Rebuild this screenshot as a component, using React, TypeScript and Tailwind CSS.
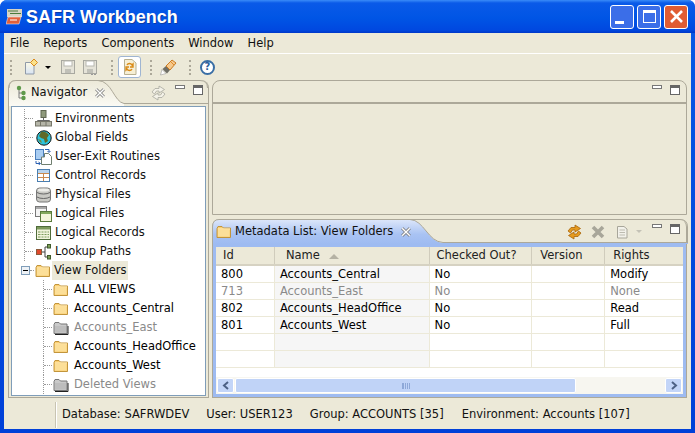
import type { ReactNode } from "react";

function Folder({ gray = false }: { gray?: boolean }) {
  return (
    <svg width="16" height="14" viewBox="0 0 16 14" className="shrink-0">
      {gray ? (
        <>
          <path d="M1 3.5 L2 1.5 H6 L7.5 3 H14 V12.5 H1 Z" fill="#c9c9c9" stroke="#777" />
          <path d="M2 13.5 H15 V5" fill="none" stroke="#222" />
          <path d="M2 5 H13 V11.5 H2 Z" fill="#bdbdbd" />
        </>
      ) : (
        <>
          <path d="M1 3.5 L2 1.5 H6 L7.5 3 H14.5 V12.5 H1 Z" fill="#fbcf72" stroke="#c2953c" />
          <path d="M2 5 H13.5 V11.5 H2 Z" fill="#fcdf98" />
          <path d="M2 4 H14" stroke="#fff0c4" />
        </>
      )}
    </svg>
  );
}

function EnvironmentsIcon() {
  return (
    <svg width="17" height="17" viewBox="0 0 17 17">
      <rect x="6" y="0.5" width="5" height="7" fill="#8f9a7c" stroke="#5f6650" />
      <path d="M8.5 8 V10 M2.5 11 V10.5 H14.5 V11" stroke="#666" fill="none" />
      <rect x="0.5" y="11.5" width="16" height="4.5" fill="#b5b5a8" stroke="#77776a" />
      <path d="M5.5 12 V16 M11 12 V16" stroke="#77776a" />
    </svg>
  );
}

function GlobeIcon() {
  return (
    <svg width="16" height="16" viewBox="0 0 16 16">
      <circle cx="8" cy="8" r="7.2" fill="#2cc4dc" stroke="#111" />
      <path d="M5 2 C8 1 11 2 13 5 L11 8 L12 11 L9 13 L8 9 L5 8 L3 6 Z" fill="#5f6a2a" />
      <path d="M2 9 L5 10 L6 13 L4 12 Z" fill="#6a8a4a" />
    </svg>
  );
}

function UserExitIcon() {
  return (
    <svg width="17" height="17" viewBox="0 0 17 17">
      <rect x="0.5" y="1.5" width="8" height="10" fill="#a9cdf2" stroke="#4a7ebb" />
      <path d="M9.5 5.5 H13.5 L16.5 8.5 V16.5 H6.5 V9 H9.5 Z" fill="#fff" stroke="#6f7f6f" />
      <path d="M10 1.5 H14 V4 M12.5 3 L14 4.5 L15.5 3" stroke="#2a5fb0" fill="none" />
      <path d="M1 13 V15.5 H5 M3.5 14 L5.5 15.5 L3.5 17" stroke="#2a5fb0" fill="none" />
    </svg>
  );
}

function ControlRecordsIcon() {
  return (
    <svg width="13" height="13" viewBox="0 0 13 13">
      <rect x="0.5" y="0.5" width="12" height="12" fill="#fff" stroke="#4a7eb0" />
      <rect x="1" y="1" width="11" height="3" fill="#b8d4ee" />
      <path d="M1 4.5 H12 M6.5 4.5 V12 M1 8.5 H12" stroke="#c98a4e" />
    </svg>
  );
}

function PhysicalFilesIcon() {
  return (
    <svg width="15" height="16" viewBox="0 0 15 16">
      <rect x="0.5" y="1" width="14" height="14" rx="3" fill="#c9c9c4" stroke="#777" />
      <path d="M1 5.5 C4 7.5 11 7.5 14 5.5 M1 10 C4 12 11 12 14 10" fill="none" stroke="#666" />
      <ellipse cx="7.5" cy="3" rx="6" ry="1.6" fill="#ecece8" />
    </svg>
  );
}

function LogicalFilesIcon() {
  return (
    <svg width="17" height="16" viewBox="0 0 17 16">
      <rect x="0.5" y="0.5" width="11" height="10" fill="#f4f4f4" stroke="#777" />
      <rect x="1" y="1" width="10" height="2" fill="#aaa" />
      <rect x="5.5" y="5.5" width="11" height="10" fill="#f5f5dc" stroke="#5a7a3c" />
      <rect x="6" y="6" width="10" height="2" fill="#84a85e" />
    </svg>
  );
}

function LogicalRecordsIcon() {
  return (
    <svg width="15" height="14" viewBox="0 0 15 14">
      <rect x="0.5" y="0.5" width="14" height="13" fill="#f1f3dc" stroke="#4f6b3a" />
      <rect x="1" y="1" width="13" height="2.5" fill="#7d9a5c" />
      <path d="M2 6 H13 M2 8.5 H13 M2 11 H13" stroke="#7d9a5c" />
      <path d="M5 5 V12 M8 5 V12 M11 5 V12" stroke="#f1f3dc" />
    </svg>
  );
}

function LookupPathsIcon() {
  return (
    <svg width="16" height="16" viewBox="0 0 16 16">
      <rect x="0.5" y="5.5" width="5" height="5" fill="#e0492c" stroke="#8a5a3a" />
      <path d="M6 8 H9 M9 3 V13 M9 3 H11 M9 13 H11" stroke="#444" fill="none" />
      <rect x="11.5" y="0.5" width="3" height="3.5" fill="#7fa05a" stroke="#3f5a2a" />
      <rect x="11.5" y="11.5" width="3" height="3.5" fill="#7fa05a" stroke="#3f5a2a" />
    </svg>
  );
}

function SyncIcon({ color = "#e59a1e", edge = "#a8650a" }: { color?: string; edge?: string }) {
  return (
    <svg width="15" height="16" viewBox="0 0 15 16">
      <path d="M1 7 L4 3.5 H8 V1 L13.5 4.5 L8 8 V6 H5.5 L3.5 9 Z" fill={color} stroke={edge} strokeWidth="0.8" />
      <path d="M14 9 L11 12.5 H7 V15 L1.5 11.5 L7 8 V10 H9.5 L11.5 7 Z" fill={color} stroke={edge} strokeWidth="0.8" />
    </svg>
  );
}

function CloseGlyph() {
  return (
    <svg width="10" height="10" viewBox="0 0 10 10" className="relative block">
      <path d="M1.2 1.2 L8.8 8.8 M8.8 1.2 L1.2 8.8" stroke="#777" strokeWidth="3" />
      <path d="M1.2 1.2 L8.8 8.8 M8.8 1.2 L1.2 8.8" stroke="#fff" strokeWidth="1.4" />
    </svg>
  );
}

function MinMax() {
  return (
    <div className="flex items-start gap-[8px]">
      <div className="w-[10px] h-[4px] border border-[#777] bg-white" />
      <div className="w-[10px] h-[10px] border border-[#666] border-t-[3px] bg-white" />
    </div>
  );
}

function Gripper() {
  return <div className="w-[2px] h-[15px] border-l-2 border-dotted border-[#aca899]" />;
}

function DiskIcon({ extra = false }: { extra?: boolean }) {
  return (
    <svg width="16" height="16" viewBox="0 0 16 16">
      <rect x="1.5" y="1.5" width="13" height="13" fill="#e5e3d8" stroke="#a8a8a0" />
      <rect x="4" y="2" width="8" height="5" fill="#fff" stroke="#b8b8b0" />
      <rect x="5" y="10" width="6" height="4" fill="#c0c0b8" />
      {extra && <path d="M9 15.5 H11 M12 15.5 H14" stroke="#999" />}
    </svg>
  );
}

function Connector({ children }: { children?: ReactNode }) {
  return (
    <div className="w-[9px] h-full flex items-center border-l border-dotted border-[#999]">
      <div className="w-full border-t border-dotted border-[#999]">{children}</div>
    </div>
  );
}

const topItems: { label: string; icon: ReactNode }[] = [
  { label: "Environments", icon: <EnvironmentsIcon /> },
  { label: "Global Fields", icon: <GlobeIcon /> },
  { label: "User-Exit Routines", icon: <UserExitIcon /> },
  { label: "Control Records", icon: <ControlRecordsIcon /> },
  { label: "Physical Files", icon: <PhysicalFilesIcon /> },
  { label: "Logical Files", icon: <LogicalFilesIcon /> },
  { label: "Logical Records", icon: <LogicalRecordsIcon /> },
  { label: "Lookup Paths", icon: <LookupPathsIcon /> },
];

const folders = [
  { label: "ALL VIEWS" },
  { label: "Accounts_Central" },
  { label: "Accounts_East", gray: true },
  { label: "Accounts_HeadOffice" },
  { label: "Accounts_West" },
  { label: "Deleted Views", gray: true },
];

const columns = [
  { label: "Id", width: "w-[59px]", pad: "pl-[7px]" },
  { label: "Name", width: "w-[155px]", pad: "pl-[11px]" },
  { label: "Checked Out?", width: "w-[103px]", pad: "pl-[7px]" },
  { label: "Version", width: "w-[73px]", pad: "pl-[8px]" },
  { label: "Rights", width: "w-[78px]", pad: "pl-[8px]" },
];

const rows = [
  { id: "800", name: "Accounts_Central", out: "No", rights: "Modify" },
  { id: "713", name: "Accounts_East", out: "No", rights: "None", muted: true },
  { id: "802", name: "Accounts_HeadOffice", out: "No", rights: "Read" },
  { id: "801", name: "Accounts_West", out: "No", rights: "Full" },
  { id: "", name: "", out: "", rights: "" },
  { id: "", name: "", out: "", rights: "" },
];

function Navigator() {
  return (
    <div className="w-[201px] h-full flex flex-col border-x border-b border-[#aca899] rounded-t-[8px]">
      <div className="relative h-[26px] shrink-0 flex items-center pl-[7px] pr-[5px]">
        <svg width="199" height="26" viewBox="0 0 199 26" className="absolute left-0 top-0" fill="none">
          <defs>
            <linearGradient id="navTab" x1="0" y1="0" x2="0" y2="1">
              <stop offset="0" stopColor="#ece9d8" />
              <stop offset="1" stopColor="#fbfaf4" />
            </linearGradient>
          </defs>
          <path d="M0 26 V8 Q0 0.5 7 0.5 H89 C103 1 105 22 115 23.5 V26 Z" fill="url(#navTab)" />
          <path d="M0 8 Q0 0.5 7 0.5 H191 Q198.5 0.5 198.5 8" stroke="#aca899" />
          <path d="M89 0.5 C103 1 105 22 115 23.5 H199" stroke="#aca899" />
        </svg>
        <svg width="10" height="16" viewBox="0 0 10 16" className="relative mr-[5px]">
          <path d="M3 3 V13 M3 8 H7 M3 13 H7" stroke="#7a7a7a" fill="none" />
          <circle cx="3" cy="3" r="2.2" fill="#5f9a4a" />
          <circle cx="7.5" cy="8" r="2.2" fill="#5f9a4a" />
          <circle cx="7.5" cy="13" r="2.2" fill="#5f9a4a" />
        </svg>
        <span className="relative text-[#111]">Navigator</span>
        <div className="relative ml-[8px]">
          <CloseGlyph />
        </div>
        <div className="relative ml-auto flex items-start gap-[9px]">
          <SyncIcon color="#f4f2e8" edge="#a8a8a0" />
          <MinMax />
        </div>
      </div>
      <div className="mx-[2px] mb-[1px] flex-1 border border-[#7f9db9] bg-white pt-[2px]">
        {topItems.map((item) => (
          <div key={item.label} className="h-[19px] flex items-center pl-[12px]">
            <Connector />
            <div className="w-[17px] ml-[2px] flex justify-center">{item.icon}</div>
            <span className="ml-[3px] text-[#111]">{item.label}</span>
          </div>
        ))}
        <div className="h-[19px] flex items-center pl-[9px]">
          <div className="w-[9px] h-[9px] border border-[#7f9db9] bg-[#eef2f6] flex items-center justify-center">
            <div className="w-[5px] h-[1px] bg-black" />
          </div>
          <div className="w-[4px] border-t border-dotted border-[#999]" />
          <div className="w-[16px] ml-[1px] flex">
            <Folder />
          </div>
          <span className="ml-[1px] px-[2px] leading-[19px] bg-[#ece9d8] text-[#111]">View Folders</span>
        </div>
        {folders.map((item) => (
          <div key={item.label} className="h-[19px] flex items-center pl-[31px]">
            <Connector />
            <div className="ml-[1px]">
              <Folder gray={item.gray} />
            </div>
            <span className={`ml-[5px] ${item.gray ? "text-[#8a8a8a]" : "text-black"}`}>{item.label}</span>
          </div>
        ))}
      </div>
    </div>
  );
}

function EmptyPanel() {
  return (
    <div className="h-[135px] shrink-0 flex flex-col border border-[#aca899] rounded-t-[8px]">
      <div className="h-[23px] pt-[4px] flex items-start justify-end pr-[6px] border-b-2 border-[#aca899]">
        <MinMax />
      </div>
    </div>
  );
}

function MetadataList() {
  return (
    <div className="flex-1 mt-[4px] flex flex-col border-x border-b border-[#aca899] rounded-t-[8px] min-h-0">
      <div className="relative h-[25px] shrink-0 flex items-center pl-[3px] pr-[6px]">
        <svg width="476" height="25" viewBox="0 0 476 25" className="absolute -left-px top-0" fill="none">
          <defs>
            <linearGradient id="activeTab" x1="0" y1="0" x2="0" y2="1">
              <stop offset="0" stopColor="#dde7fa" />
              <stop offset="0.6" stopColor="#a9c3f3" />
              <stop offset="1" stopColor="#9ebbf1" />
            </linearGradient>
          </defs>
          <path d="M0.5 25 V8 Q0.5 0.5 7 0.5 H198 C212 1 216 23 231 24 H234 V25 Z" fill="url(#activeTab)" />
          <path d="M0.5 25 V8 Q0.5 0.5 7 0.5 H198 C212 1 216 23 231 23.5 H475" stroke="#aca899" />
          <path d="M198 0.5 H468 Q475.5 0.5 475.5 8 V25" stroke="#aca899" />
          <path d="M231 24.5 H476" stroke="#9ebbf1" />
        </svg>
        <div className="relative">
          <Folder />
        </div>
        <span className="relative ml-[3px] text-[#111]">Metadata List: View Folders</span>
        <div className="relative ml-[8px]">
          <CloseGlyph />
        </div>
        <div className="relative ml-auto flex items-center">
          <SyncIcon />
          <svg width="14" height="14" viewBox="0 0 14 14" className="ml-[9px]">
            <path d="M2 2 L12 12 M12 2 L2 12" stroke="#a8a69a" strokeWidth="3.6" />
          </svg>
          <svg width="14" height="15" viewBox="0 0 14 15" className="ml-[11px]">
            <path d="M1.5 2.5 H8 L11 5 V14 H1.5 Z" fill="#f2f1ea" stroke="#a8a69a" />
            <path d="M3.5 6 H9 M3.5 8.5 H9 M3.5 11 H9" stroke="#bdbbb0" />
          </svg>
          <div className="ml-[6px] mr-[10px] w-0 h-0 border-x-[3px] border-t-[3px] border-x-transparent border-t-[#c4c2b6]" />
          <div className="-mt-[5px]">
            <MinMax />
          </div>
        </div>
      </div>
      <div className="flex-1 flex flex-col border-[3px] border-[#9ebbf1] min-h-0 bg-white">
        <div className="h-[19px] shrink-0 flex bg-[#ece9d8] border-b-2 border-[#d6d2c2]">
          {columns.map((c, i) => (
            <div
              key={c.label}
              className={`${c.width} ${c.pad} pt-[1px] flex items-center text-[#222] ${i < 4 ? "border-r border-[#d0ccbc]" : ""}`}
            >
              {c.label}
              {c.label === "Name" && (
                <div className="ml-[9px] w-0 h-0 border-x-[5px] border-b-[5px] border-x-transparent border-b-[#b5b2a4]" />
              )}
            </div>
          ))}
        </div>
        <div className="flex-1 overflow-hidden">
          {rows.map((r, i) => (
            <div key={i} className={`h-[17px] flex border-b border-[#ece9d8] ${r.muted ? "text-[#8a8a8a]" : "text-black"}`}>
              <div className="w-[59px] pl-[5px] border-r border-[#ece9d8] leading-[16px]">{r.id}</div>
              <div className="w-[155px] pl-[5px] border-r border-[#ece9d8] bg-[#f6f6f6] leading-[16px]">{r.name}</div>
              <div className="w-[103px] pl-[5px] border-r border-[#ece9d8] leading-[16px]">{r.out}</div>
              <div className="w-[73px] border-r border-[#ece9d8]" />
              <div className="w-[78px] pl-[5px] leading-[16px]">{r.rights}</div>
            </div>
          ))}
        </div>
        <div className="h-[17px] shrink-0 flex bg-[#f7f6f0]">
          <div className="w-[17px] m-[1px] rounded-[2px] bg-[#c3d5f8] border border-white flex items-center justify-center">
            <svg width="8" height="9" viewBox="0 0 8 9" fill="none">
              <path d="M6 1 L2 4.5 L6 8" stroke="#4d6185" strokeWidth="2" />
            </svg>
          </div>
          <div className="w-[341px] my-[1px] rounded-[2px] bg-[#c0d3f7] border border-white flex items-center justify-center">
            <div className="w-[8px] h-[6px] border-x border-[#8ea8d8] bg-[repeating-linear-gradient(90deg,#8ea8d8_0,#8ea8d8_1px,transparent_1px,transparent_2px)]" />
          </div>
          <div className="flex-1" />
          <div className="w-[17px] m-[1px] rounded-[2px] bg-[#c3d5f8] border border-white flex items-center justify-center">
            <svg width="8" height="9" viewBox="0 0 8 9" fill="none">
              <path d="M2 1 L6 4.5 L2 8" stroke="#4d6185" strokeWidth="2" />
            </svg>
          </div>
        </div>
      </div>
    </div>
  );
}

export default function App() {
  return (
    <div className="w-[695px] h-[433px] flex flex-col overflow-hidden rounded-t-[7px] bg-gradient-to-b from-[#0a5ae6] to-[#0040d8] text-[11.5px] leading-none font-['DejaVu_Sans',sans-serif]">
      {/* Title bar */}
      <div className="h-[33px] shrink-0 flex items-center pl-[6px] pr-[3px] bg-[linear-gradient(180deg,#3a8cf8_0,#0a5ae8_3px,#0055e5_18px,#0048e0_30px,#0038c8_33px)]">
        <svg width="17" height="17" viewBox="0 0 17 17">
          <rect x="1" y="1" width="15" height="8" fill="#d8d4c4" />
          <path d="M2 3 H12 M4 5.5 H15" stroke="#4a7a3a" />
          <path d="M2 9 H15 L13 16 H0 Z" fill="#e2603a" stroke="#fff" strokeWidth="0.5" />
          <path d="M4 12 H11" stroke="#fff" />
        </svg>
        <span className="ml-[3px] text-[18px] font-bold text-white font-['Liberation_Sans',sans-serif] [text-shadow:1px_1px_0_#0a3aa8]">
          SAFR Workbench
        </span>
        <div className="ml-auto mr-[4px] flex gap-[3px]">
          <div className="w-[24px] h-[24px] rounded-[3px] border border-white bg-[#3b6ee8] flex items-end pl-[4px] pb-[4px]">
            <div className="w-[9px] h-[3px] bg-white" />
          </div>
          <div className="w-[24px] h-[24px] rounded-[3px] border border-white bg-[#3b6ee8] flex items-center justify-center">
            <div className="w-[13px] h-[13px] border border-t-[3px] border-white" />
          </div>
          <div className="w-[24px] h-[24px] rounded-[3px] border border-white bg-[#e05c33] flex items-center justify-center">
            <svg width="15" height="15" viewBox="0 0 15 15">
              <path d="M2 2 L13 13 M13 2 L2 13" stroke="#fff" strokeWidth="2.6" />
            </svg>
          </div>
        </div>
      </div>

      <div className="flex-1 mx-[4px] mb-[4px] flex flex-col bg-[#ece9d8] min-h-0">
        {/* Menu */}
        <div className="h-[21px] shrink-0 flex items-center border-b border-white pl-[6px] pt-[1px] gap-[14px] text-[#111]">
          <span>File</span>
          <span>Reports</span>
          <span>Components</span>
          <span>Window</span>
          <span>Help</span>
        </div>

        {/* Toolbar */}
        <div className="h-[26px] shrink-0 flex items-center pl-[6px]">
          <Gripper />
          <svg width="16" height="16" viewBox="0 0 16 16" className="ml-[12px]">
            <defs>
              <linearGradient id="newDoc" x1="0" y1="0" x2="0" y2="1">
                <stop offset="0" stopColor="#fbf9e6" />
                <stop offset="1" stopColor="#d8e4f4" />
              </linearGradient>
            </defs>
            <path d="M1.5 3.5 H10 V15 H1.5 Z" fill="url(#newDoc)" stroke="#8f9aa8" />
            <path d="M10 0 L13.5 3.5 L10 7 L6.5 3.5 Z" fill="#fbe28a" stroke="#d98a1e" />
          </svg>
          <div className="ml-[5px] w-0 h-0 border-x-[3px] border-t-[3px] border-x-transparent border-t-black" />
          <div className="ml-[9px] flex gap-[6px]">
            <DiskIcon />
            <DiskIcon extra />
          </div>
          <div className="ml-[13px]">
            <Gripper />
          </div>
          <div className="ml-[5px] w-[23px] h-[22px] rounded-[3px] border border-[#9fb5d2] bg-white flex items-center justify-center">
            <svg width="14" height="16" viewBox="0 0 14 16">
              <path d="M1.5 0.5 H9 L13 4 V15.5 H1.5 Z" fill="#f6efd5" stroke="#b8b090" />
              <path d="M4 6 C5 4 8 4 9 6 L10 5 V8 H7 M9 10 C8 12 5 12 4 10 L3 11 V8 H6" fill="none" stroke="#d98a16" strokeWidth="1.4" />
            </svg>
          </div>
          <div className="ml-[9px]">
            <Gripper />
          </div>
          <svg width="17" height="17" viewBox="0 0 17 17" className="ml-[8px]">
            <path d="M0.5 16 L2 10.5 L6 14.5 Z" fill="#fff" stroke="#999" strokeWidth="0.6" />
            <path d="M2.5 10 L6 7 L10 11 L7 14.5 Z" fill="#6f6f66" />
            <path d="M6 7 L12 1 L16 4 L10 11 Z" fill="#f6c98c" stroke="#c97a22" />
            <path d="M11 3 L14 6" stroke="#e08b2c" />
          </svg>
          <div className="ml-[12px]">
            <Gripper />
          </div>
          <div className="ml-[9px] w-[15px] h-[15px] rounded-full border-2 border-[#3a6ea5] bg-white flex items-center justify-center text-[10px] font-bold text-[#2a5d9c]">
            ?
          </div>
        </div>

        {/* Panels */}
        <div className="h-[318px] shrink-0 flex pl-[4px] pr-[4px] gap-[3px]">
          <Navigator />
          <div className="flex-1 flex flex-col min-w-0">
            <EmptyPanel />
            <MetadataList />
          </div>
        </div>

        {/* Status bar */}
        <div className="flex-1 flex items-center pt-[2px] text-[#111]">
          <div className="ml-[51px] w-[2px] h-[26px] border-l border-[#c8c4b2] bg-white" />
          <span className="ml-[5px]">Database: SAFRWDEV</span>
          <span className="ml-[17px]">User: USER123</span>
          <span className="ml-[17px]">Group: ACCOUNTS [35]</span>
          <span className="ml-[18px]">Environment: Accounts [107]</span>
        </div>
      </div>
    </div>
  );
}
